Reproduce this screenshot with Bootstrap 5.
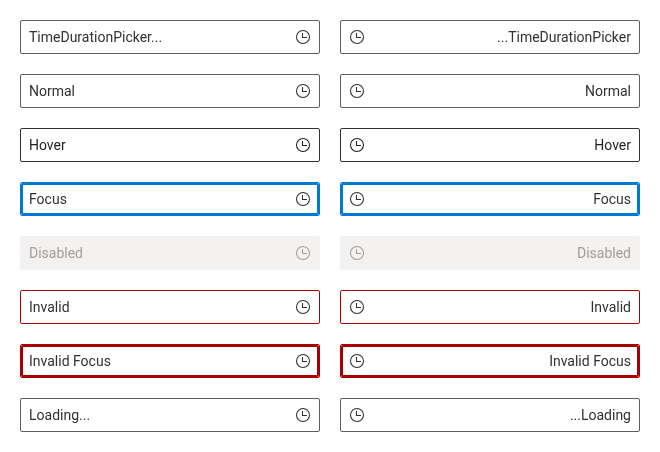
<!DOCTYPE html>
<html lang="en">
<head>
<meta charset="utf-8">
<meta name="viewport" content="width=device-width, initial-scale=1">
<title>TimeDurationPicker</title>
<link href="https://cdn.jsdelivr.net/npm/bootstrap@5.3.0/dist/css/bootstrap.min.css" rel="stylesheet">
<style>
body{font-family:Roboto,"Liberation Sans",sans-serif;font-size:14px;line-height:20px;color:#323130;background:#fff}
.states{display:grid;grid-template-columns:300px 300px;gap:20px;padding:20px;will-change:transform}
.picker{position:relative;height:34px;border:1px solid #605e5c;border-radius:2px;background:#fff;padding:0 8px}
.picker svg{width:16px;height:16px;flex:none;fill:none;stroke:currentColor;stroke-width:1.05}
.is-hover{border-color:#323130;color:#201f1e}
.is-focus{border-color:#0078d4}
.is-off{border-color:#f3f2f1;background:#f3f2f1;color:#a19f9d}
.is-bad{border-color:#a80000}
.is-bad-focus{border-color:#a80000}
/* focus ring drawn just inside the border */
.is-focus::after,.is-bad-focus::after{content:"";position:absolute;inset:0;border:2px solid #0078d4;border-radius:2px;pointer-events:none}
.is-bad-focus::after{border-color:#a80000}
</style>
</head>
<body>
<svg class="d-none"><symbol id="clock" viewBox="0 0 16 16"><circle cx="8" cy="8" r="6.5"/><path d="M7.5 4v4.5H12"/></symbol></svg>
<main class="states">
<div class="picker d-flex align-items-center justify-content-between"><span>TimeDurationPicker...</span><svg><use href="#clock"/></svg></div>
<div class="picker d-flex align-items-center justify-content-between" dir="rtl"><span>TimeDurationPicker...</span><svg><use href="#clock"/></svg></div>
<div class="picker d-flex align-items-center justify-content-between"><span>Normal</span><svg><use href="#clock"/></svg></div>
<div class="picker d-flex align-items-center justify-content-between" dir="rtl"><span>Normal</span><svg><use href="#clock"/></svg></div>
<div class="picker is-hover d-flex align-items-center justify-content-between"><span>Hover</span><svg><use href="#clock"/></svg></div>
<div class="picker is-hover d-flex align-items-center justify-content-between" dir="rtl"><span>Hover</span><svg><use href="#clock"/></svg></div>
<div class="picker is-focus d-flex align-items-center justify-content-between"><span>Focus</span><svg><use href="#clock"/></svg></div>
<div class="picker is-focus d-flex align-items-center justify-content-between" dir="rtl"><span>Focus</span><svg><use href="#clock"/></svg></div>
<div class="picker is-off d-flex align-items-center justify-content-between"><span>Disabled</span><svg><use href="#clock"/></svg></div>
<div class="picker is-off d-flex align-items-center justify-content-between" dir="rtl"><span>Disabled</span><svg><use href="#clock"/></svg></div>
<div class="picker is-bad d-flex align-items-center justify-content-between"><span>Invalid</span><svg><use href="#clock"/></svg></div>
<div class="picker is-bad d-flex align-items-center justify-content-between" dir="rtl"><span>Invalid</span><svg><use href="#clock"/></svg></div>
<div class="picker is-bad-focus d-flex align-items-center justify-content-between"><span>Invalid Focus</span><svg><use href="#clock"/></svg></div>
<div class="picker is-bad-focus d-flex align-items-center justify-content-between" dir="rtl"><span>Invalid Focus</span><svg><use href="#clock"/></svg></div>
<div class="picker d-flex align-items-center justify-content-between"><span>Loading...</span><svg><use href="#clock"/></svg></div>
<div class="picker d-flex align-items-center justify-content-between" dir="rtl"><span>Loading...</span><svg><use href="#clock"/></svg></div>
</main>
<script src="https://cdn.jsdelivr.net/npm/bootstrap@5.3.0/dist/js/bootstrap.bundle.min.js"></script>
</body>
</html>
